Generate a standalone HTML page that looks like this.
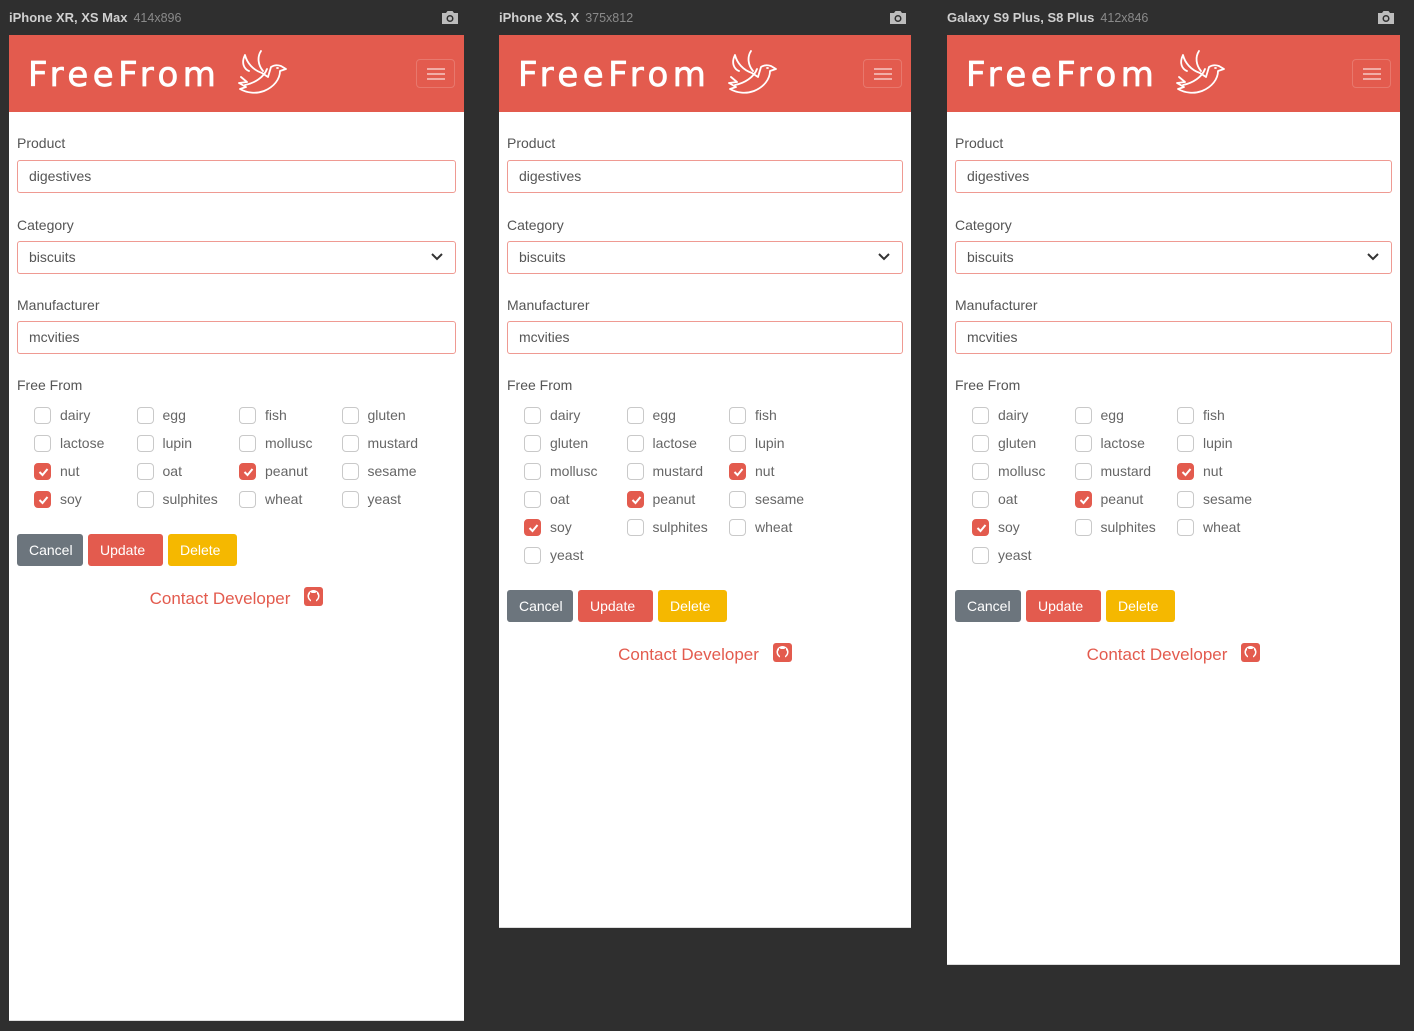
<!DOCTYPE html>
<html><head><meta charset="utf-8">
<style>
*{box-sizing:border-box;margin:0;padding:0}
body{width:1414px;height:1031px;background:#2f2f2f;font-family:"Liberation Sans","DejaVu Sans",sans-serif;position:relative;overflow:hidden}
.title{position:absolute;top:10px;font-size:13px;font-weight:bold;color:#d0d0d0;white-space:nowrap}
.title span{font-weight:normal;color:#8a8a8a;margin-left:6px;font-size:12.5px}
.cam{position:absolute;top:10px;width:18px;height:15px}
.panel{position:absolute;top:35px;background:#fff;border-bottom:1px solid #ddd}
.hdr{height:77px;background:#e35b4e;position:relative}
.logo{position:absolute;left:19px;top:20px;color:#fff;font-size:34px;letter-spacing:4.5px;font-family:"DejaVu Sans",sans-serif;-webkit-text-stroke:0.7px #fff;line-height:40px}
.dove{position:absolute;left:222px;top:12px}
.ham{position:absolute;right:9px;top:24px;width:39px;height:29px;border:1px solid rgba(255,255,255,.18);border-radius:4px}
.ham i{position:absolute;left:10px;width:18px;height:1.5px;background:rgba(255,255,255,.5)}
.c{padding:0 8px}
.lab{font-size:14px;color:#555;line-height:20px;height:20px}
.inp{height:33px;border:1px solid #ef9a92;border-radius:3px;font-size:14px;color:#555;padding:0 11px;line-height:31px;position:relative}
.inp svg{position:absolute;right:12px;top:11px}
.grid{display:flex;flex-wrap:wrap;padding-left:17px;margin-top:6px}
.cb{width:102.5px;height:28px;display:flex;align-items:center;font-size:14px;color:#666}
.box{width:17px;height:17px;border:1px solid #c9c9c9;border-radius:4px;margin-right:9px;flex:none;position:relative}
.box.on{background:#e35b4e;border-color:#e35b4e}
.box.on svg{position:absolute;left:3px;top:3px}
.btns{display:flex;margin-top:21px}
.btn{height:32px;line-height:32px;padding:0 12px;color:#fff;font-size:14px;border-radius:3px;margin-right:5px}
.contact{text-align:center;margin-top:21px;font-size:17px;color:#e35b4e;line-height:20px;height:20px}
.gh{display:inline-block;width:19px;height:19px;background:#e35b4e;border-radius:3px;vertical-align:-2px;margin-left:14px;position:relative}
</style></head><body>

<div class="title" style="left:9px">iPhone XR, XS Max<span>414x896</span></div>
<div class="title" style="left:499px">iPhone XS, X<span>375x812</span></div>
<div class="title" style="left:947px">Galaxy S9 Plus, S8 Plus<span>412x846</span></div>
<svg class="cam" style="left:441px" viewBox="0 0 18 15"><path d="M1 3h4l1.5-2h5L13 3h4v11H1z" fill="#bdbdbd"/><circle cx="9" cy="8.5" r="3.5" fill="#2f2f2f"/><circle cx="9" cy="8.5" r="2" fill="#bdbdbd"/></svg>
<svg class="cam" style="left:889px" viewBox="0 0 18 15"><path d="M1 3h4l1.5-2h5L13 3h4v11H1z" fill="#bdbdbd"/><circle cx="9" cy="8.5" r="3.5" fill="#2f2f2f"/><circle cx="9" cy="8.5" r="2" fill="#bdbdbd"/></svg>
<svg class="cam" style="left:1377px" viewBox="0 0 18 15"><path d="M1 3h4l1.5-2h5L13 3h4v11H1z" fill="#bdbdbd"/><circle cx="9" cy="8.5" r="3.5" fill="#2f2f2f"/><circle cx="9" cy="8.5" r="2" fill="#bdbdbd"/></svg>

<div class="panel" style="left:9px;width:455px;height:986px">
 <div class="hdr"><div class="logo">FreeFrom</div>
  <svg class="dove" width="60" height="58" viewBox="0 0 60 58" fill="none" stroke="#fff" stroke-width="1.8" stroke-linecap="round" stroke-linejoin="round"><path d="M30 4c-4 6-3 14 2 20M14 8c2 8 8 15 17 18l6 4 3-10c3-2 7-2 10-1l5 3-6 2c0 8-6 16-16 20-8 3-17 2-24-2l6-2-7-4 8-1-6-5M14 8c-4 8-1 14 4 16M36 22c-3 8-12 14-22 16M46 21h1"/></svg>
  <div class="ham"><i style="top:8px"></i><i style="top:13px"></i><i style="top:18px"></i></div></div>
 <div class="c">
  <div class="lab" style="margin-top:21px">Product</div>
  <div class="inp" style="margin-top:7px">digestives</div>
  <div class="lab" style="margin-top:22px">Category</div>
  <div class="inp" style="margin-top:6px">biscuits<svg width="12" height="8" viewBox="0 0 12 8"><path d="M1 1l5 5 5-5" stroke="#333" stroke-width="2" fill="none"/></svg></div>
  <div class="lab" style="margin-top:21px">Manufacturer</div>
  <div class="inp" style="margin-top:6px">mcvities</div>
  <div class="lab" style="margin-top:21px">Free From</div>
  <div class="grid">
   <div class="cb"><span class="box"></span>dairy</div><div class="cb"><span class="box"></span>egg</div><div class="cb"><span class="box"></span>fish</div><div class="cb"><span class="box"></span>gluten</div>
   <div class="cb"><span class="box"></span>lactose</div><div class="cb"><span class="box"></span>lupin</div><div class="cb"><span class="box"></span>mollusc</div><div class="cb"><span class="box"></span>mustard</div>
   <div class="cb"><span class="box on"><svg width="11" height="10" viewBox="0 0 11 10"><path d="M1.5 5l3 3 5-6" stroke="#fff" stroke-width="2" fill="none"/></svg></span>nut</div><div class="cb"><span class="box"></span>oat</div><div class="cb"><span class="box on"><svg width="11" height="10" viewBox="0 0 11 10"><path d="M1.5 5l3 3 5-6" stroke="#fff" stroke-width="2" fill="none"/></svg></span>peanut</div><div class="cb"><span class="box"></span>sesame</div>
   <div class="cb"><span class="box on"><svg width="11" height="10" viewBox="0 0 11 10"><path d="M1.5 5l3 3 5-6" stroke="#fff" stroke-width="2" fill="none"/></svg></span>soy</div><div class="cb"><span class="box"></span>sulphites</div><div class="cb"><span class="box"></span>wheat</div><div class="cb"><span class="box"></span>yeast</div>
  </div>
  <div class="btns"><div class="btn" style="background:#6c757d;width:66px">Cancel</div><div class="btn" style="background:#e35b4e;width:75px">Update</div><div class="btn" style="background:#f5b800;width:69px">Delete</div></div>
  <div class="contact">Contact Developer<span class="gh"><svg width="19" height="19" viewBox="0 0 19 19"><circle cx="9.5" cy="9" r="6" fill="#fff"/><path d="M7 16v-3c-1-1-2-2-2-4 0-1 1-2 1-2 0-1 0-2 0-2l2 1h3l2-1v2s1 1 1 2c0 2-1 3-2 4v3z" fill="#e35b4e"/></svg></span></div>
 </div>
</div>

<div class="panel" style="left:499px;width:412px;height:893px">
 <div class="hdr"><div class="logo">FreeFrom</div>
  <svg class="dove" width="60" height="58" viewBox="0 0 60 58" fill="none" stroke="#fff" stroke-width="1.8" stroke-linecap="round" stroke-linejoin="round"><path d="M30 4c-4 6-3 14 2 20M14 8c2 8 8 15 17 18l6 4 3-10c3-2 7-2 10-1l5 3-6 2c0 8-6 16-16 20-8 3-17 2-24-2l6-2-7-4 8-1-6-5M14 8c-4 8-1 14 4 16M36 22c-3 8-12 14-22 16M46 21h1"/></svg>
  <div class="ham"><i style="top:8px"></i><i style="top:13px"></i><i style="top:18px"></i></div></div>
 <div class="c">
  <div class="lab" style="margin-top:21px">Product</div>
  <div class="inp" style="margin-top:7px">digestives</div>
  <div class="lab" style="margin-top:22px">Category</div>
  <div class="inp" style="margin-top:6px">biscuits<svg width="12" height="8" viewBox="0 0 12 8"><path d="M1 1l5 5 5-5" stroke="#333" stroke-width="2" fill="none"/></svg></div>
  <div class="lab" style="margin-top:21px">Manufacturer</div>
  <div class="inp" style="margin-top:6px">mcvities</div>
  <div class="lab" style="margin-top:21px">Free From</div>
  <div class="grid">
   <div class="cb"><span class="box"></span>dairy</div><div class="cb"><span class="box"></span>egg</div><div class="cb"><span class="box"></span>fish</div>
   <div class="cb"><span class="box"></span>gluten</div><div class="cb"><span class="box"></span>lactose</div><div class="cb"><span class="box"></span>lupin</div>
   <div class="cb"><span class="box"></span>mollusc</div><div class="cb"><span class="box"></span>mustard</div><div class="cb"><span class="box on"><svg width="11" height="10" viewBox="0 0 11 10"><path d="M1.5 5l3 3 5-6" stroke="#fff" stroke-width="2" fill="none"/></svg></span>nut</div>
   <div class="cb"><span class="box"></span>oat</div><div class="cb"><span class="box on"><svg width="11" height="10" viewBox="0 0 11 10"><path d="M1.5 5l3 3 5-6" stroke="#fff" stroke-width="2" fill="none"/></svg></span>peanut</div><div class="cb"><span class="box"></span>sesame</div>
   <div class="cb"><span class="box on"><svg width="11" height="10" viewBox="0 0 11 10"><path d="M1.5 5l3 3 5-6" stroke="#fff" stroke-width="2" fill="none"/></svg></span>soy</div><div class="cb"><span class="box"></span>sulphites</div><div class="cb"><span class="box"></span>wheat</div>
   <div class="cb"><span class="box"></span>yeast</div>
  </div>
  <div class="btns"><div class="btn" style="background:#6c757d;width:66px">Cancel</div><div class="btn" style="background:#e35b4e;width:75px">Update</div><div class="btn" style="background:#f5b800;width:69px">Delete</div></div>
  <div class="contact">Contact Developer<span class="gh"><svg width="19" height="19" viewBox="0 0 19 19"><circle cx="9.5" cy="9" r="6" fill="#fff"/><path d="M7 16v-3c-1-1-2-2-2-4 0-1 1-2 1-2 0-1 0-2 0-2l2 1h3l2-1v2s1 1 1 2c0 2-1 3-2 4v3z" fill="#e35b4e"/></svg></span></div>
 </div>
</div>

<div class="panel" style="left:947px;width:453px;height:930px">
 <div class="hdr"><div class="logo">FreeFrom</div>
  <svg class="dove" width="60" height="58" viewBox="0 0 60 58" fill="none" stroke="#fff" stroke-width="1.8" stroke-linecap="round" stroke-linejoin="round"><path d="M30 4c-4 6-3 14 2 20M14 8c2 8 8 15 17 18l6 4 3-10c3-2 7-2 10-1l5 3-6 2c0 8-6 16-16 20-8 3-17 2-24-2l6-2-7-4 8-1-6-5M14 8c-4 8-1 14 4 16M36 22c-3 8-12 14-22 16M46 21h1"/></svg>
  <div class="ham"><i style="top:8px"></i><i style="top:13px"></i><i style="top:18px"></i></div></div>
 <div class="c">
  <div class="lab" style="margin-top:21px">Product</div>
  <div class="inp" style="margin-top:7px">digestives</div>
  <div class="lab" style="margin-top:22px">Category</div>
  <div class="inp" style="margin-top:6px">biscuits<svg width="12" height="8" viewBox="0 0 12 8"><path d="M1 1l5 5 5-5" stroke="#333" stroke-width="2" fill="none"/></svg></div>
  <div class="lab" style="margin-top:21px">Manufacturer</div>
  <div class="inp" style="margin-top:6px">mcvities</div>
  <div class="lab" style="margin-top:21px">Free From</div>
  <div class="grid" style="width:333px">
   <div class="cb"><span class="box"></span>dairy</div><div class="cb"><span class="box"></span>egg</div><div class="cb"><span class="box"></span>fish</div>
   <div class="cb"><span class="box"></span>gluten</div><div class="cb"><span class="box"></span>lactose</div><div class="cb"><span class="box"></span>lupin</div>
   <div class="cb"><span class="box"></span>mollusc</div><div class="cb"><span class="box"></span>mustard</div><div class="cb"><span class="box on"><svg width="11" height="10" viewBox="0 0 11 10"><path d="M1.5 5l3 3 5-6" stroke="#fff" stroke-width="2" fill="none"/></svg></span>nut</div>
   <div class="cb"><span class="box"></span>oat</div><div class="cb"><span class="box on"><svg width="11" height="10" viewBox="0 0 11 10"><path d="M1.5 5l3 3 5-6" stroke="#fff" stroke-width="2" fill="none"/></svg></span>peanut</div><div class="cb"><span class="box"></span>sesame</div>
   <div class="cb"><span class="box on"><svg width="11" height="10" viewBox="0 0 11 10"><path d="M1.5 5l3 3 5-6" stroke="#fff" stroke-width="2" fill="none"/></svg></span>soy</div><div class="cb"><span class="box"></span>sulphites</div><div class="cb"><span class="box"></span>wheat</div>
   <div class="cb"><span class="box"></span>yeast</div>
  </div>
  <div class="btns"><div class="btn" style="background:#6c757d;width:66px">Cancel</div><div class="btn" style="background:#e35b4e;width:75px">Update</div><div class="btn" style="background:#f5b800;width:69px">Delete</div></div>
  <div class="contact">Contact Developer<span class="gh"><svg width="19" height="19" viewBox="0 0 19 19"><circle cx="9.5" cy="9" r="6" fill="#fff"/><path d="M7 16v-3c-1-1-2-2-2-4 0-1 1-2 1-2 0-1 0-2 0-2l2 1h3l2-1v2s1 1 1 2c0 2-1 3-2 4v3z" fill="#e35b4e"/></svg></span></div>
 </div>
</div>
</body></html>
